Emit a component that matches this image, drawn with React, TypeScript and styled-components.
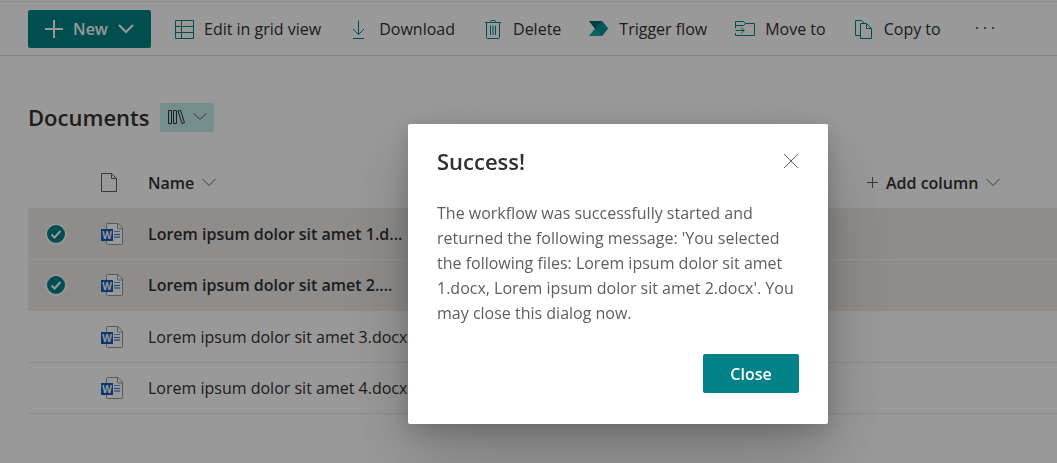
import React from "react";
import styled, { createGlobalStyle } from "styled-components";

const GlobalStyle = createGlobalStyle`
  *, *::before, *::after { box-sizing: border-box; }
  body {
    margin: 0;
    background: #ffffff;
    color: #323130;
    font-family: "Segoe UI", "Open Sans", "Noto Sans", sans-serif;
    font-size: 16px;
    line-height: 24px;
  }
  button, input { font: inherit; color: inherit; }
`;

const Page = styled.div`
  min-height: 100vh;
  overflow: hidden;
`;

const Toolbar = styled.div`
  display: flex;
  align-items: center;
  height: 55px;
  margin-top: 1px;
  padding-left: 28px;
  border-top: 1px solid #edebe9;
  border-bottom: 1px solid #e1dfdd;
`;

const NewButton = styled.button`
  display: flex;
  align-items: center;
  justify-content: center;
  gap: 10px;
  width: 123px;
  height: 38px;
  margin-right: 9px;
  padding: 0;
  border: 0;
  border-radius: 2px;
  background: #038387;
  color: #ffffff;
  font-weight: 600;
  flex: none;
`;

const CommandButton = styled.button`
  display: flex;
  align-items: center;
  gap: 10px;
  height: 52px;
  padding: 0 14px;
  border: 0;
  background: none;
  white-space: nowrap;
  flex: none;
`;

const MoreButton = styled(CommandButton)`
  padding: 0 20px;
`;

const Icon = styled.svg`
  display: block;
  flex: none;
  fill: none;
  stroke: currentColor;
`;

const CommandIcon = styled(Icon)`
  color: #038387;
`;

const SubtleIcon = styled(Icon)`
  color: #605e5c;
`;

const Heading = styled.header`
  display: flex;
  align-items: center;
  gap: 10px;
  padding: 45px 28px 0;
`;

const Title = styled.h1`
  margin: 0;
  font-size: 22px;
  line-height: 32px;
  font-weight: 600;
`;

const ViewButton = styled.button`
  display: flex;
  align-items: center;
  gap: 8px;
  height: 29px;
  padding: 0 7px;
  border: 0;
  border-radius: 2px;
  background: #c5ecec;
`;

const Library = styled.main`
  padding-left: 28px;
`;

const Table = styled.table`
  width: 100%;
  margin-top: 24px;
  border-collapse: separate;
  border-spacing: 0;
  table-layout: fixed;
`;

const HeadCell = styled.th<{ $width?: number }>`
  width: ${(p) => (p.$width ? `${p.$width}px` : "auto")};
  height: 51px;
  padding: 0;
  text-align: left;
  font-weight: 600;
`;

const HeadButton = styled.button`
  display: flex;
  align-items: center;
  gap: 8px;
  padding: 0;
  border: 0;
  background: none;
  font-weight: 600;
  white-space: nowrap;
`;

const Cell = styled.td`
  height: 51px;
  padding: 0;
  white-space: nowrap;
`;

const Row = styled.tr<{ $selected: boolean }>`
  background: ${(p) => (p.$selected ? "#edebe9" : "transparent")};
  font-weight: ${(p) => (p.$selected ? 600 : 400)};
  ${Cell} { border-bottom: 1px solid ${(p) => (p.$selected ? "#faf9f8" : "#edebe9")}; }
  &:nth-child(odd) ${Cell} { height: 52px; }
  &:nth-child(2) ${Cell} { border-bottom-color: #edebe9; }
`;

const FileLink = styled.a`
  color: inherit;
  text-decoration: none;
`;

const CheckLabel = styled.label<{ $visible: boolean }>`
  display: grid;
  width: 22px;
  height: 22px;
  margin-left: 17px;
  border: 2px solid #faf9f8;
  border-radius: 50%;
  background: #038387;
  color: #ffffff;
  opacity: ${(p) => (p.$visible ? 1 : 0)};
  > * { grid-area: 1 / 1; margin: auto; }
`;

const CheckInput = styled.input`
  appearance: none;
  width: 18px;
  height: 18px;
`;

const Overlay = styled.div`
  position: fixed;
  inset: 0;
  display: flex;
  align-items: flex-start;
  justify-content: center;
  padding: 124px 0 0 179px;
  background: rgba(0, 0, 0, 0.4);
`;

const Dialog = styled.section`
  width: 420px;
  padding: 21px 29px 31px;
  border-radius: 2px;
  background: #ffffff;
  box-shadow: 0 32px 72px rgba(0, 0, 0, 0.22), 0 6px 23px rgba(0, 0, 0, 0.18);
`;

const DialogHeader = styled.div`
  display: flex;
  align-items: center;
  justify-content: space-between;
`;

const DialogTitle = styled.h2`
  margin: 0;
  font-size: 22px;
  line-height: 32px;
  font-weight: 600;
`;

const DismissButton = styled.button`
  padding: 0;
  border: 0;
  background: none;
  color: #605e5c;
`;

const Message = styled.p`
  margin: 24px 0 28px;
  color: #605e5c;
  line-height: 25px;
`;

const Actions = styled.div`
  display: flex;
  justify-content: flex-end;
`;

const CloseButton = styled.button`
  width: 96px;
  height: 39px;
  padding: 0;
  border: 0;
  border-radius: 2px;
  background: #038387;
  color: #ffffff;
  font-weight: 600;
`;

const Chevron = () => (
  <SubtleIcon width="14" height="14" viewBox="0 0 14 14">
    <path d="M.5 3 7 9.500 13.500 3" />
  </SubtleIcon>
);

const WordIcon = () => (
  <Icon width="22" height="22" viewBox="0 0 22 22" role="img" aria-label="Word document">
    <path d="M6.500.500H17l4.500 4.500v15.500a1 1 0 0 1-1 1h-14a1 1 0 0 1-1-1v-19a1 1 0 0 1 1-1Z" fill="#fff" stroke="#979593" />
    <path d="M16.500.500V5a1 1 0 0 0 1 1h4" stroke="#979593" />
    <path d="M13 8.500h6" stroke="#41a5ee" />
    <path d="M13 11.500h6" stroke="#2b7cd3" />
    <path d="M13 14h6" stroke="#185abd" />
    <rect y="6" width="12" height="12" fill="#185abd" stroke="none" />
    <text x="6" y="15.500" textAnchor="middle" fill="#fff" stroke="none" fontSize="10" fontWeight="700">W</text>
  </Icon>
);

const commands: { label: string; icon: React.ReactNode }[] = [
  {
    label: "Edit in grid view",
    icon: <path d="M1.500 1.500h18v18h-18ZM7.500 1.500v18M1.500 7.500h18M1.500 13.500h18" />,
  },
  { label: "Download", icon: <path d="M9.500 1.500v14M4 10l5.500 5.500L15 10M4 19.500h11" /> },
  {
    label: "Delete",
    icon: <path d="M2 3.500h16M7.500 3.500v-1a1 1 0 0 1 1-1h3a1 1 0 0 1 1 1v1M3.500 3.500v15a1 1 0 0 0 1 1h11a1 1 0 0 0 1-1v-15M7.500 6.500v9.500M10 6.500v9.500M12.500 6.500v9.500" />,
  },
  {
    label: "Trigger flow",
    icon: (
      <g stroke="none">
        <path d="M0 2h13l6 7.500-6 7.500H0l6-7.500Z" fill="#12a5a9" />
        <path d="M0 2h13L6 9.500Z" fill="#026a70" />
        <path d="M13 2l6 7.500-6 7.500L6 9.500Z" fill="#0b9196" />
      </g>
    ),
  },
  {
    label: "Move to",
    icon: <path d="M.500 9V2.500h8l2 2h9v12H.500V14M.500 6.500h8l2-2M.500 11.500H9M6 8.500l3 3-3 3" />,
  },
  {
    label: "Copy to",
    icon: <path d="M6.500 16.500h-5v-15h6l3.500 3.500M6.500 4.500h6l5 5v10h-11ZM12.500 4.500v5h5" />,
  },
];

const files = [
  { name: "Lorem ipsum dolor sit amet 1.d...", selected: true },
  { name: "Lorem ipsum dolor sit amet 2....", selected: true },
  { name: "Lorem ipsum dolor sit amet 3.docx", selected: false },
  { name: "Lorem ipsum dolor sit amet 4.docx", selected: false },
];

export default function App() {
  return (
    <Page>
      <GlobalStyle />
      <Toolbar role="toolbar">
        <NewButton>
          <Icon width="18" height="18" viewBox="0 0 18 18" strokeWidth="2">
            <path d="M9 0v18M0 9h18" />
          </Icon>
          New
          <Icon width="16" height="16" viewBox="0 0 16 16" strokeWidth="2">
            <path d="m1 4 7 7 7-7" />
          </Icon>
        </NewButton>
        {commands.map((c) => (
          <CommandButton key={c.label}>
            <CommandIcon width="20" height="20" viewBox="0 0 20 20">
              {c.icon}
            </CommandIcon>
            {c.label}
          </CommandButton>
        ))}
        <MoreButton aria-label="More commands">
          <Icon width="20" height="20" viewBox="0 0 20 20">
            <g fill="currentColor" stroke="none">
              <circle cx="2" cy="9" r="1" />
              <circle cx="10" cy="9" r="1" />
              <circle cx="18" cy="9" r="1" />
            </g>
          </Icon>
        </MoreButton>
      </Toolbar>

      <Heading>
        <Title>Documents</Title>
        <ViewButton aria-label="View options">
          <Icon width="18" height="16" viewBox="0 0 18 16">
            <path d="M1.500 1.500h3v13h-3ZM6.500 1.500h3v13h-3ZM11 2l2.500-.700 4 12.500-2.500.700Z" />
          </Icon>
          <Chevron />
        </ViewButton>
      </Heading>

      <Library>
        <Table>
          <thead>
            <tr>
              <HeadCell $width={73} aria-label="Selected" />
              <HeadCell $width={47} aria-label="File type">
                <SubtleIcon width="16" height="22" viewBox="0 0 16 22">
                  <path d="M.500 1.500h10l5 5v13H.500ZM10.500 1.500v5h5" />
                </SubtleIcon>
              </HeadCell>
              <HeadCell $width={719}>
                <HeadButton>
                  Name
                  <Chevron />
                </HeadButton>
              </HeadCell>
              <HeadCell>
                <HeadButton>
                  <SubtleIcon width="11" height="11" viewBox="0 0 11 11">
                    <path d="M5.500 0v11M0 5.500h11" />
                  </SubtleIcon>
                  Add column
                  <Chevron />
                </HeadButton>
              </HeadCell>
            </tr>
          </thead>
          <tbody>
            {files.map((f) => (
              <Row key={f.name} $selected={f.selected}>
                <Cell>
                  <CheckLabel $visible={f.selected}>
                    <CheckInput type="checkbox" defaultChecked={f.selected} aria-label={f.name} />
                    <Icon width="12" height="12" viewBox="0 0 12 12" strokeWidth="2">
                      <path d="m1.500 6.500 3 3 6-6.500" />
                    </Icon>
                  </CheckLabel>
                </Cell>
                <Cell>
                  <WordIcon />
                </Cell>
                <Cell colSpan={2}>
                  <FileLink href="#">{f.name}</FileLink>
                </Cell>
              </Row>
            ))}
          </tbody>
        </Table>
      </Library>

      <Overlay>
        <Dialog role="dialog" aria-labelledby="dialog-title">
          <DialogHeader>
            <DialogTitle id="dialog-title">Success!</DialogTitle>
            <DismissButton aria-label="Dismiss">
              <Icon width="16" height="16" viewBox="0 0 16 16">
                <path d="m1 1 14 14M15 1 1 15" />
              </Icon>
            </DismissButton>
          </DialogHeader>
          <Message>
            The workflow was successfully started and returned the following message: 'You selected the
            following files: Lorem ipsum dolor sit amet 1.docx, Lorem ipsum dolor sit amet 2.docx'. You
            may close this dialog now.
          </Message>
          <Actions>
            <CloseButton>Close</CloseButton>
          </Actions>
        </Dialog>
      </Overlay>
    </Page>
  );
}
